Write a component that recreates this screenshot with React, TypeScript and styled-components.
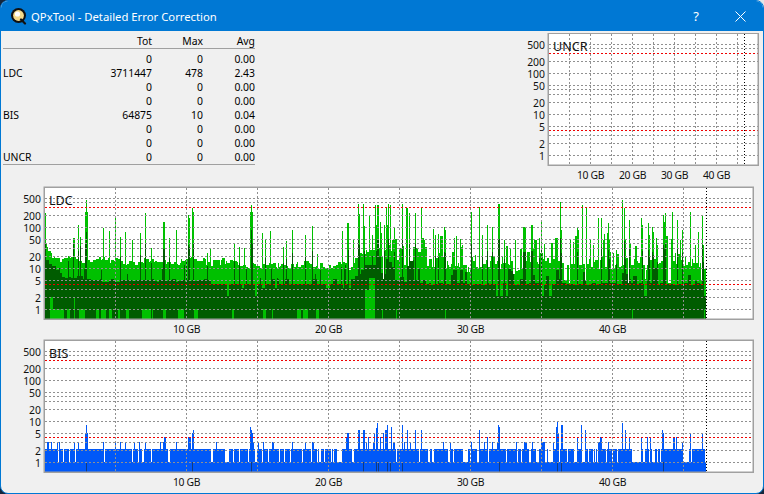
import React from "react";
import styled, { createGlobalStyle } from "styled-components";

const GlobalStyle = createGlobalStyle`
  html, body { margin: 0; padding: 0; background: linear-gradient(to bottom left, #e4e6e8 6%, #14263c 8%); }
  #root { width: 764px; height: 494px; }
`;
const Window = styled.div`
  width: 764px; height: 494px; box-sizing: border-box;
  border: 1px solid #0078d4; border-radius: 8px; overflow: hidden;
  display: flex; flex-direction: column; background: #f0f0f0;
  font-family: "Noto Sans", "Open Sans", sans-serif; color: #000;
`;
const TitleBar = styled.header`
  height: 30px; flex: none; display: flex; align-items: center; background: #0078d4; color: #fff;
  padding-left: 9px;
`;
const AppIcon = styled.svg`width: 18px; height: 18px; flex: none; margin-right: 3px;`;
const Title = styled.div`font-size: 11.3px; flex: 1; white-space: nowrap;`;
const HelpButton = styled.div`width: 46px; box-sizing: border-box; padding-left: 4px; text-align: center; font-size: 13px;`;
const CloseButton = styled.div`width: 46px; display: flex; justify-content: center;`;
const TopRow = styled.section`
  height: 155px; flex: none; display: flex; justify-content: space-between; align-items: flex-start;
`;
const Stats = styled.div`
  width: 252px; margin: 3px 0 0 2px; font-size: 10.4px; line-height: 14px;
  border-bottom: 1px solid #a0a0a0; white-space: nowrap;
`;
const StatsRow = styled.div<{ $head?: boolean }>`
  display: grid; grid-template-columns: 60px 89px 51px 52px; height: 14px;
  ${p => p.$head ? "border-bottom: 1px solid #a0a0a0; margin-bottom: 3px;" : ""}
`;
const NameCell = styled.div``;
const Num = styled.div`text-align: right;`;
const ChartsColumn = styled.section`display: flex; flex-direction: column; gap: 2px; padding-left: 13px;`;
const Graph = styled.svg`
  display: block; flex: none;
  text { font-family: "Noto Sans", "Open Sans", sans-serif; font-size: 10.4px; fill: #111; }
  text.name { font-size: 12.6px; }
  text.gb { letter-spacing: -0.35px; }
`;
const UncrGraph = styled(Graph)`margin: 2px 3px 0 0;`;

const rows: [string, string, string, string][] = [
  ["", "0", "0", "0.00"], ["LDC", "3711447", "478", "2.43"], ["", "0", "0", "0.00"], ["", "0", "0", "0.00"],
  ["BIS", "64875", "10", "0.04"], ["", "0", "0", "0.00"], ["", "0", "0", "0.00"], ["UNCR", "0", "0", "0.00"],
];

function rngFrom(seed: number) {
  let a = seed;
  return () => {
    a |= 0; a = (a + 0x6d2b79f5) | 0;
    let t = Math.imul(a ^ (a >>> 15), 1 | a);
    t = (t + Math.imul(t ^ (t >>> 7), 61 | t)) ^ t;
    return ((t ^ (t >>> 14)) >>> 0) / 4294967296;
  };
}

const ldcSpikes: [number, number][] = [[45,213],[86,200],[85,212],[87,212],[78,225],[73,238],[74,238],[80,237],[103,228],[109,231],[115,217],[120,237],[125,232],[132,240],[140,233],[145,213],[151,248],[163,222],[164,222],[169,238],[176,230],[188,215],[189,218],[192,208],[193,212],[207,253],[210,248],[234,243],[239,247],[244,248],[250,212],[251,205],[252,212],[262,233],[265,239],[270,231],[283,247],[286,241],[292,230],[305,235],[312,226],[317,254],[342,231],[347,223],[348,223],[353,239],[358,204],[359,214],[363,204],[364,226],[369,216],[372,235],[375,205],[376,225],[377,205],[378,205],[380,222],[384,225],[386,207],[387,225],[388,204],[390,205],[394,227],[402,204],[406,208],[407,208],[409,213],[415,213],[421,208],[433,229],[435,235],[438,234],[444,227],[445,230],[454,238],[456,236],[460,239],[462,245],[471,212],[479,207],[482,235],[487,225],[492,227],[498,204],[499,204],[504,240],[515,240],[523,227],[524,227],[525,227],[531,225],[532,225],[539,238],[541,221],[560,202],[561,230],[570,240],[573,242],[577,227],[578,230],[582,205],[586,208],[590,240],[593,245],[598,218],[601,218],[603,240],[608,223],[609,240],[616,250],[622,200],[624,208],[625,240],[629,220],[641,218],[642,225],[648,223],[649,235],[652,227],[653,232],[657,245],[663,215],[664,222],[665,213],[672,212],[677,220],[680,240],[682,230],[690,212],[695,245],[698,232],[702,215],[703,245]];

function buildLdc() {
  const r = rngFrom(77);
  const spikes = new Map(ldcSpikes);
  let light = "", dark = "";
  let run = 0, lowTop = 319, wave = 0, hold = 0, heldLt = 260, holdD = 0, heldDt = 284;
  for (let x = 45; x <= 705; x++) {
    const c = x + 0.5;
    if (hold-- <= 0) {
      hold = Math.floor(r() * 3);
      wave = wave * 0.4 + (r() - 0.5) * 8;
      let base: number;
      if (x < 52) base = 248 + (x - 45) * 1.4;
      else if (x < 350) base = 259 + ((x - 52) * 6) / 298;
      else if (x < 376) base = 262 - (x - 350) * 0.55;
      else if (x < 440) base = 243 + r() * 24;
      else base = 258 + r() * 10;
      heldLt = base + wave;
      if (x > 376 && r() < 0.2) heldLt = 232 + r() * 24;
      if (x > 376 && r() < 0.06) heldLt = 274 + r() * 10;
    }
    let lt = heldLt;
    const sp = spikes.get(x);
    if (sp !== undefined) lt = sp;

    if (holdD-- <= 0) {
      holdD = 1 + Math.floor(r() * 3);
      if (x < 60) heldDt = 260 + (x - 45) * 0.9;
      else if (x < 90) heldDt = 276 + r() * 3;
      else if (x < 210) heldDt = 279 + r() * 3;
      else if (x < 350) heldDt = r() < 0.12 ? 279 : 284;
      else if (x < 365) heldDt = 278 - (x - 350) + r() * 6;
      else if (x < 376) heldDt = 262 + r() * 8;
      else if (x < 420) heldDt = 256 + r() * 28;
      else heldDt = r() < 0.25 ? 268 + r() * 14 : 283 + r() * 2;
      if (x > 205 && x < 350 && r() < 0.14) heldDt = r() < 0.6 ? 288 : 296;
      if (x > 420 && r() < 0.12) heldDt = 296;
    }
    let dt = heldDt;
    if (sp !== undefined && r() < 0.55) dt = Math.min(dt, sp + (282 - sp) * 0.45);
    if (x > 55 && x < 350 && r() < 0.045) dt = Math.min(dt, lt + 2 + r() * 8);
    if (x === 86) dt = 232;
    if (x === 251) dt = 230;
    dt = Math.max(dt, lt);

    if (run-- <= 0) {
      run = Math.floor(r() * 4);
      const p = x < 130 ? 0.46 : x < 210 ? 0.3 : 0.18;
      lowTop = x < 372 && r() < p ? (x < 110 && r() < 0.14 ? 297 : 309) : 319;
    }
    let lo = x < 372 ? lowTop : 319;
    if (x >= 365 && x < 369) lo = 290;
    if (x >= 369 && x <= 374) lo = 278;
    if ([382, 396, 445, 632, 704].includes(x)) lo = 309;
    if (dt > lo) dt = lo;

    light += `M${c} ${lt.toFixed(0)}V319`;
    if (lo > dt) dark += `M${c} ${dt.toFixed(0)}V${lo}`;
  }
  return { light, dark };
}

const bisSpikes: [number, number][] = [[47,442],[48,442],[51,442],[57,442],[59,442],[74,442],[78,442],[85,433],[86,425],[87,433],[103,442],[115,442],[120,442],[125,442],[134,442],[139,442],[145,442],[160,442],[163,442],[164,437],[165,437],[176,442],[188,437],[189,437],[190,437],[192,433],[193,430],[216,442],[250,427],[251,430],[252,433],[253,442],[258,442],[263,442],[272,442],[273,442],[292,442],[305,442],[312,442],[313,442],[346,437],[347,433],[348,433],[358,430],[359,430],[363,430],[364,430],[366,442],[368,437],[373,442],[374,433],[376,428],[377,423],[380,437],[383,433],[385,430],[386,430],[387,425],[391,427],[393,442],[394,442],[402,425],[404,442],[407,430],[410,442],[415,430],[421,430],[443,442],[450,442],[471,442],[479,430],[484,442],[487,437],[492,442],[497,442],[498,425],[499,427],[516,442],[524,442],[525,442],[526,442],[532,442],[541,437],[542,442],[543,442],[544,442],[553,442],[556,427],[557,421],[558,433],[561,425],[562,425],[577,437],[581,425],[585,430],[598,442],[599,442],[600,437],[601,437],[608,442],[622,423],[625,430],[629,437],[641,437],[647,437],[650,437],[662,430],[663,433],[673,437],[674,437],[676,437],[682,442],[690,433],[702,433]];
const bisDark = [86, 192, 251, 363, 376, 378, 387, 390, 402, 499, 557, 561, 663];
const bisGaps: [number, number][] = [[337, 341], [548, 552], [633, 640], [684, 688], [352, 353], [652, 654], [558, 559]];

function buildBis() {
  const r = rngFrom(2024);
  const spikes = new Map(bisSpikes);
  let blue = "", navy = "";
  for (let x = 45; x <= 705; x++) {
    const c = x + 0.5;
    const sp = spikes.get(x);
    const pGap = x < 210 ? 0.1 : x < 340 ? 0.24 : x < 400 ? 0.05 : 0.22;
    const gap = bisGaps.some(([a, b]) => x >= a && x <= b) || r() < pGap;
    const top = sp !== undefined ? sp : gap ? 462 : 449;
    blue += `M${c} ${top}V472`;
    if (bisDark.includes(x)) navy += `M${c} 462V472`;
  }
  return { blue, navy };
}

const gridVals = [1, 2, 3, 5, 10, 20, 30, 40, 50, 100, 200, 400, 500];
const tickVals = [1, 2, 5, 10, 20, 50, 100, 200, 500];

type ChartProps = {
  name: string; left: number; right: number; top: number; bottom: number; one: number;
  gbStep: number; endX: number; children?: React.ReactNode;
};

const GridDots: React.FC<{ d: string; color: string; dash: string }> = ({ d, color, dash }) => (
  <path d={d} stroke={color} strokeWidth={1} strokeDasharray={dash} fill="none" shapeRendering="crispEdges" />
);

function ChartBody({ name, left, right, top, bottom, one, gbStep, endX, children }: ChartProps) {
  const y = (v: number) => Math.round(one - 41 * Math.log10(v)) + 0.5;
  const horiz = gridVals.map(v => `M${left + 1} ${y(v)}H${right}`).join("");
  const red = [3.98, 300].map(v => `M${left + 1} ${y(v)}H${right}`).join("");
  let vert = "";
  for (let i = 1; i <= 9; i++) {
    const vx = left + 0.5 + gbStep * i;
    vert += `M${vx} ${top + 1}V${bottom}`;
  }
  const labels = [2, 4, 6, 8].map((i, n) => (
    <text key={i} className="gb" x={left + 0.5 + gbStep * i} y={bottom + 14} textAnchor="middle">{(n + 1) * 10} GB</text>
  ));
  return (
    <>
      <rect x={left} y={top} width={right - left} height={bottom - top} fill="#fff" />
      {children}
      <GridDots d={horiz} color="#909090" dash="2 2" />
      <GridDots d={vert} color="#909090" dash="2 2" />
      <GridDots d={red} color="#f00000" dash="2 2" />
      <GridDots d={`M${endX + 0.5} ${top + 1}V${bottom}`} color="#000" dash="1 2" />
      <rect x={left + 0.25} y={top + 0.25} width={right - left} height={bottom - top} fill="none" stroke="#a0a0a0" strokeWidth={1.5} />
      {tickVals.map(v => (
        <text key={v} x={left - 3} y={one - 41 * Math.log10(v) + 5} textAnchor="end">{v}</text>
      ))}
      {labels}
      <text className="name" x={left + 5} y={top + 18}>{name}</text>
    </>
  );
}

export default function App() {
  const ldc = React.useMemo(buildLdc, []);
  const bis = React.useMemo(buildBis, []);
  return (
    <>
      <GlobalStyle />
      <Window>
        <TitleBar>
          <AppIcon viewBox="0 0 18 18">
            <circle cx="8.5" cy="8.5" r="7.5" fill="#111" />
            <circle cx="8.5" cy="8.5" r="5.4" fill="#f4d98a" />
            <circle cx="7.5" cy="7" r="2.6" fill="#fff" />
            <path d="M11 12.5 L15 16.5" stroke="#111" strokeWidth="2.2" strokeLinecap="round" />
          </AppIcon>
          <Title>QPxTool - Detailed Error Correction</Title>
          <HelpButton>?</HelpButton>
          <CloseButton>
            <svg width="11" height="11" viewBox="0 0 11 11"><path d="M.5.5l10 10M10.5.5l-10 10" stroke="#fff" strokeWidth="1" /></svg>
          </CloseButton>
        </TitleBar>
        <TopRow>
          <Stats>
            <StatsRow $head><div /><Num>Tot</Num><Num>Max</Num><Num>Avg</Num></StatsRow>
            {rows.map((row, i) => (
              <StatsRow key={i}>
                <NameCell>{row[0]}</NameCell>
                <Num>{row[1]}</Num>
                <Num>{row[2]}</Num>
                <Num>{row[3]}</Num>
              </StatsRow>
            ))}
          </Stats>
          <UncrGraph width={237} height={152} viewBox="524 34 237 152">
            <ChartBody name="UNCR" left={549} right={759} top={34} bottom={166} one={156} gbStep={21} endX={745} />
          </UncrGraph>
        </TopRow>
        <ChartsColumn>
          <Graph width={744} height={151} viewBox="14 186 744 151">
            <ChartBody name="LDC" left={44} right={753} top={187} bottom={319} one={309} gbStep={71} endX={706}>
              <path d={ldc.light} stroke="#00c000" strokeWidth={1} fill="none" shapeRendering="crispEdges" />
              <path d={ldc.dark} stroke="#005c00" strokeWidth={1} fill="none" shapeRendering="crispEdges" />
            </ChartBody>
          </Graph>
          <Graph width={744} height={151} viewBox="14 339 744 151">
            <ChartBody name="BIS" left={44} right={753} top={340} bottom={472} one={462} gbStep={71} endX={706}>
              <path d={bis.blue} stroke="#0058f8" strokeWidth={1} fill="none" shapeRendering="crispEdges" />
              <path d={bis.navy} stroke="#103a80" strokeWidth={1} fill="none" shapeRendering="crispEdges" />
            </ChartBody>
          </Graph>
        </ChartsColumn>
      </Window>
    </>
  );
}
